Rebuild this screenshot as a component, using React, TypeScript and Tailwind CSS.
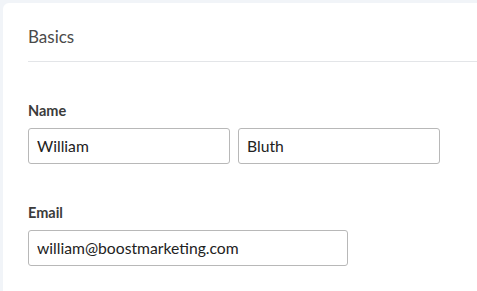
export default function App() {
  return (
    <div className="h-[291px] w-[477px] overflow-hidden bg-[#f1f4f8] pl-[3px] pt-[3px] font-['Lato',sans-serif]">
      <div className="h-full rounded-tl-md bg-white pl-[25px]">
        <div className="border-b border-[#e3e5e8] pb-[14px] pt-[23px]">
          <h2 className="text-[17px] leading-[21px] text-[#4a4a4a]">Basics</h2>
        </div>

        <div className="pt-[40px]">
          <label className="block text-[14.5px] font-bold leading-[18px] text-[#3b3b3b]">Name</label>
          <div className="mt-[8px] flex gap-[8px]">
            <input
              defaultValue="William"
              className="h-[36px] w-[202px] rounded-[3px] border border-[#b8b8b8] px-[8px] text-[15.7px] text-[#222] outline-none"
            />
            <input
              defaultValue="Bluth"
              className="h-[36px] w-[202px] rounded-[3px] border border-[#b8b8b8] px-[8px] text-[15.7px] text-[#222] outline-none"
            />
          </div>
        </div>

        <div className="pt-[40px]">
          <label className="block text-[14.5px] font-bold leading-[18px] text-[#3b3b3b]">Email</label>
          <input
            defaultValue="william@boostmarketing.com"
            className="mt-[8px] h-[36px] w-[320px] rounded-[3px] border border-[#b8b8b8] px-[8px] text-[15.7px] text-[#222] outline-none"
          />
        </div>
      </div>
    </div>
  );
}
